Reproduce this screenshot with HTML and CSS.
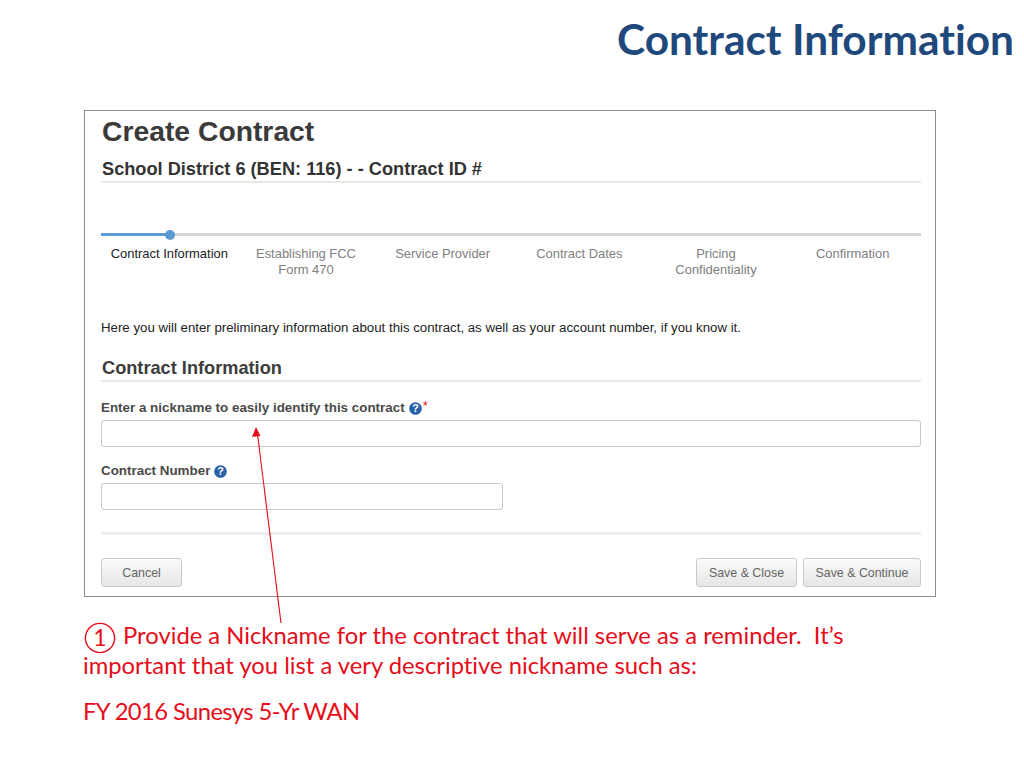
FILE: index.html
```html
<!DOCTYPE html>
<html lang="en">
<head>
    <meta charset="UTF-8">
    <title>Contract Information</title>
    <link rel="stylesheet" href="styles.css">
</head>

<body>
    <div class="slide">
        <h1 class="slide-title">Contract Information</h1>

        <div class="panel">
            <h2 class="page-title">Create Contract</h2>
            <h3 class="page-sub">School District 6 (BEN: 116) - - Contract ID #</h3>

            <!-- progress -->
            <div class="progress">
                <div class="progress-done"></div>
                <div class="progress-dot"></div>
            </div>
            <div class="steps">
                <div class="step active">Contract Information</div>
                <div class="step">Establishing FCC<br>Form 470</div>
                <div class="step">Service Provider</div>
                <div class="step">Contract Dates</div>
                <div class="step">Pricing<br>Confidentiality</div>
                <div class="step">Confirmation</div>
            </div>

            <p class="intro">Here you will enter preliminary information about this contract, as well as your account number, if you know it.</p>

            <h3 class="section-title">Contract Information</h3>

            <label class="field-label first">Enter a nickname to easily identify this contract
                <svg class="help" viewBox="0 0 14 14"><circle cx="7" cy="7" r="6.8" fill="#2a62a8"/><text x="7" y="11" text-anchor="middle" class="help-mark">?</text></svg><span class="req">*</span>
            </label>
            <input class="text-input" type="text">

            <label class="field-label second">Contract Number
                <svg class="help" viewBox="0 0 14 14"><circle cx="7" cy="7" r="6.8" fill="#2a62a8"/><text x="7" y="11" text-anchor="middle" class="help-mark">?</text></svg>
            </label>
            <input class="text-input short" type="text">

            <div class="actions">
                <button class="btn cancel">Cancel</button>
                <button class="btn close">Save &amp; Close</button>
                <button class="btn next">Save &amp; Continue</button>
            </div>
        </div>

        <div class="notes">
            <p class="note-main"><svg class="num" viewBox="0 0 32 32"><circle cx="16" cy="16" r="14.6" fill="none" stroke="#e60d1a" stroke-width="1.4"/><text x="16" y="24" text-anchor="middle" class="num-mark">1</text></svg>Provide a Nickname for the contract that will serve as a reminder.&nbsp; It’s<br>important that you list a very descriptive nickname such as:</p>
            <p class="note-example">FY 2016 Sunesys 5-Yr WAN</p>
        </div>

        <!-- arrow over the form -->
        <svg class="arrow" width="1024" height="768" viewBox="0 0 1024 768">
            <line x1="281" y1="623" x2="257.5" y2="434" stroke="#e60d1a" stroke-width="1.1"/>
            <polygon points="256,427 252,437 260.5,436" fill="#e60d1a"/>
        </svg>
    </div>
</body>
</html>
```

FILE: styles.css
```css
html, body {
    margin: 0;
    padding: 0;
    background-color: #fff;
}

.slide {
    position: relative;
    width: 1024px;
    height: 768px;
    overflow: hidden;
    font-family: "Liberation Sans", Arial, sans-serif;
}

.slide-title {
    margin: 0;
    height: 110px;
    padding: 15px 10px 0 0;
    box-sizing: border-box;
    text-align: right;
    font-family: Lato, "Open Sans", sans-serif;
    font-size: 42.4px;
    line-height: 48px;
    font-weight: 700;
    font-variant-ligatures: none;
    color: #1f497d;
}

.panel {
    box-sizing: border-box;
    width: 852px;
    height: 487px;
    margin-left: 84px;
    padding: 0 14px 0 16px;
    border: 1px solid #8c8c8c;
    color: #333;
}

.page-title {
    margin: 4px 0 0 1px;
    font-size: 28.3px;
    line-height: 32px;
    font-weight: 700;
    color: #3a3a3a;
}

.page-sub {
    margin: 11px 0 0;
    padding: 0 0 1px 1px;
    border-bottom: 2px solid #e8e8e8;
    font-size: 18.2px;
    line-height: 22px;
    font-weight: 700;
    color: #333;
}

.progress {
    position: relative;
    height: 3px;
    margin-top: 50px;
    background-color: #d4d4d4;
}

.progress-done {
    width: 69px;
    height: 3px;
    background-color: #5b9bd5;
}

.progress-dot {
    position: absolute;
    left: 64px;
    top: -3.5px;
    width: 10px;
    height: 10px;
    border-radius: 50%;
    background-color: #5b9bd5;
}

.steps {
    display: grid;
    grid-template-columns: repeat(6, 1fr);
    margin-top: 10px;
    height: 74px;
}

.step {
    text-align: center;
    font-size: 12.95px;
    line-height: 16px;
    color: #808080;
}

.step.active {
    color: #222;
}

.intro {
    margin: 0;
    font-size: 13.25px;
    line-height: 16px;
    color: #222;
}

.section-title {
    margin: 21px 0 0;
    padding: 0 0 1px 1px;
    border-bottom: 2px solid #e8e8e8;
    font-size: 18.2px;
    line-height: 22px;
    font-weight: 700;
    color: #3c3c3c;
}

.field-label {
    display: flex;
    align-items: center;
    gap: 4px;
    font-size: 13.4px;
    line-height: 16px;
    font-weight: 700;
    color: #4a4a4a;
}

.field-label.first {
    margin-top: 18px;
}

.field-label.second {
    margin-top: 16px;
}

.help {
    width: 13px;
    height: 13px;
}

.help-mark {
    font-family: "Liberation Sans", sans-serif;
    font-size: 11.5px;
    font-weight: 700;
    fill: #fff;
}

.req {
    margin: -5px 0 0 -3px;
    color: #e8101c;
    font-weight: 400;
}

.text-input {
    display: block;
    box-sizing: border-box;
    width: 100%;
    height: 27px;
    margin: 4px 0 0;
    border: 1px solid #c8c8c8;
    border-radius: 3px;
    background-color: #fff;
}

.text-input.short {
    width: 402px;
}

.actions {
    display: flex;
    gap: 6px;
    margin-top: 22px;
    padding-top: 23px;
    border-top: 3px solid #ededed;
}

.btn {
    box-sizing: border-box;
    height: 29px;
    padding: 0;
    border: 1px solid #c9c9c9;
    border-radius: 3px;
    background: linear-gradient(#fbfbfb, #e6e6e6);
    font-family: "Liberation Sans", Arial, sans-serif;
    font-size: 12.4px;
    color: #666;
}

.cancel {
    width: 81px;
    margin-right: auto;
}

.close {
    width: 101px;
}

.next {
    width: 118px;
}

.notes {
    margin: 23px 0 0 83px;
    font-family: Lato, "Open Sans", sans-serif;
    font-size: 23.8px;
    font-variant-ligatures: none;
    color: #e60d1a;
}

.note-main {
    margin: 0;
    line-height: 30px;
}

.num {
    width: 32px;
    height: 32px;
    margin: -6px 7px -6px 1px;
    vertical-align: middle;
}

.num-mark {
    font-family: Lato, "Open Sans", sans-serif;
    font-size: 23px;
    fill: #e60d1a;
}

.note-example {
    margin: 16px 0 0;
    line-height: 30px;
    letter-spacing: -0.6px;
}

.arrow {
    position: absolute;
    left: 0;
    top: 0;
    pointer-events: none;
}
```
